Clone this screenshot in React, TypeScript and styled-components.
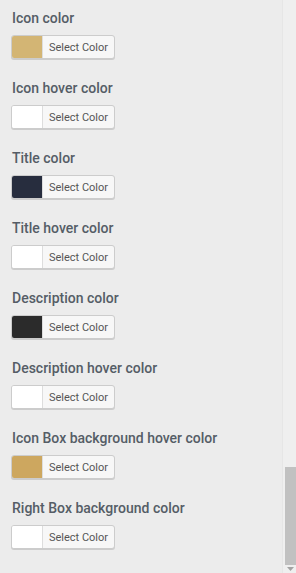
import React from 'react';
import styled, { createGlobalStyle } from 'styled-components';

const Global = createGlobalStyle`
  html, body {
    margin: 0;
    padding: 0;
    background: #ececec;
  }
  body {
    font-family: Roboto, "Noto Sans", sans-serif;
  }
`;

const Frame = styled.div`
  display: flex;
  flex-direction: row;
  width: 296px;
  height: 573px;
  overflow: hidden;
  background: #ececec;
`;

const Panel = styled.div`
  flex: 1;
  display: flex;
  flex-direction: column;
  padding: 8px 0 0 12px;
`;

const Field = styled.div`
  display: flex;
  flex-direction: column;
  align-items: flex-start;
  height: 70px;
`;

const Label = styled.div`
  font-size: 14px;
  font-weight: 500;
  color: #555d66;
  line-height: 20px;
  margin-bottom: 7px;
`;

const PickerButton = styled.button`
  display: flex;
  flex-direction: row;
  align-items: stretch;
  height: 24px;
  width: 104px;
  margin-left: -1px;
  padding: 0;
  border: 1px solid #cccccc;
  border-radius: 3px;
  box-shadow: 0 1px 0 #cccccc;
  background: #f7f7f7;
  overflow: hidden;
  cursor: pointer;
`;

const Swatch = styled.span<{ $color: string }>`
  width: 30px;
  background: ${p => p.$color};
  border-right: 1px solid #dddddd;
`;

const ButtonText = styled.span`
  flex: 1;
  display: flex;
  align-items: center;
  justify-content: center;
  font-family: Roboto, "Noto Sans", sans-serif;
  font-size: 11px;
  color: #555555;
`;

const Scrollbar = styled.div`
  width: 13px;
  display: flex;
  flex-direction: column;
  align-items: flex-end;
  background: #efefef;
  border-left: 1px solid #e6e6e6;
`;

const Track = styled.div`
  flex: 1;
  display: flex;
  flex-direction: column;
  justify-content: flex-end;
  width: 11px;
`;

const Thumb = styled.div`
  height: 98px;
  background: #c1c1c1;
`;

const Arrow = styled.div`
  height: 8px;
  width: 11px;
  display: flex;
  align-items: center;
  justify-content: center;
`;

const fields = [
  { label: 'Icon color', color: '#d3b574' },
  { label: 'Icon hover color', color: '#ffffff' },
  { label: 'Title color', color: '#272d3e' },
  { label: 'Title hover color', color: '#ffffff' },
  { label: 'Description color', color: '#2b2b2b' },
  { label: 'Description hover color', color: '#ffffff' },
  { label: 'Icon Box background hover color', color: '#cda75f' },
  { label: 'Right Box background color', color: '#ffffff' },
];

export default function App() {
  return (
    <Frame>
      <Global />
      <Panel>
        {fields.map(f => (
          <Field key={f.label}>
            <Label>{f.label}</Label>
            <PickerButton type="button">
              <Swatch $color={f.color} />
              <ButtonText>Select Color</ButtonText>
            </PickerButton>
          </Field>
        ))}
      </Panel>
      <Scrollbar>
        <Track>
          <Thumb />
        </Track>
        <Arrow>
          <svg width="7" height="4" viewBox="0 0 7 4">
            <polygon points="0,0 7,0 3.5,4" fill="#a3a3a3" />
          </svg>
        </Arrow>
      </Scrollbar>
    </Frame>
  );
}
